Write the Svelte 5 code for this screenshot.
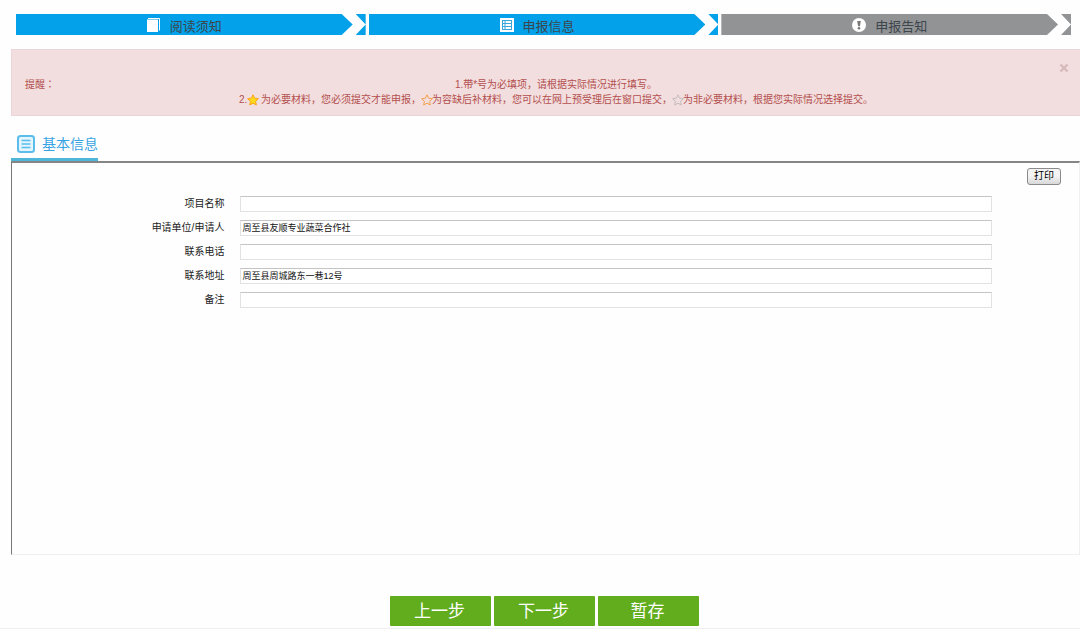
<script lang="ts">
  const steps = [
    { label: "阅读须知", icon: "book", active: true },
    { label: "申报信息", icon: "list", active: true },
    { label: "申报告知", icon: "notice", active: false },
  ];

  let fields = $state([
    { id: "project", label: "项目名称", value: "" },
    { id: "applicant", label: "申请单位/申请人", value: "周至县友顺专业蔬菜合作社" },
    { id: "phone", label: "联系电话", value: "" },
    { id: "address", label: "联系地址", value: "周至县周城路东一巷12号" },
    { id: "remark", label: "备注", value: "" },
  ]);

  let showAlert = $state(true);
</script>

{#snippet star(kind: string)}
  <svg class="star {kind}" viewBox="0 0 12 12" aria-hidden="true">
    <path d="M6 .8 7.6 4.2 11.4 4.7 8.6 7.3 9.3 11 6 9.2 2.7 11 3.4 7.3 .6 4.7 4.4 4.2Z" />
  </svg>
{/snippet}

<main>
  <ol class="steps">
    {#each steps as step}
      <li class:active={step.active}>
        <div class="bar">
          <svg class="step-icon" viewBox="0 0 14 14" aria-hidden="true">
            {#if step.icon === "book"}
              <path d="M0 1.5H11V14H0Z" fill="#fff" />
              <path d="M1 .5H12.5V12.5" fill="none" stroke="#fff" />
            {:else if step.icon === "list"}
              <path d="M0 0H14V14H0Z" fill="#fff" />
              <path
                d="M2 2.5H12M2 5.5H12M2 8.5H12M2 11.5H12M2.5 2V12M5 2V12M11.5 2V12"
                fill="none"
                stroke="#3aa6dc"
              />
            {:else}
              <circle cx="7" cy="7" r="7" fill="#fff" />
              <path d="M5.2 3H8.8L7.9 8.2H6.1Z" fill="#777" />
              <circle cx="7" cy="10.2" r="1.3" fill="#777" />
            {/if}
          </svg>
          <span>{step.label}</span>
        </div>
        <div class="tail"></div>
      </li>
    {/each}
  </ol>

  {#if showAlert}
    <div class="alert" role="alert">
      <strong>提醒：</strong>
      <p>
        1.带*号为必填项，请根据实际情况进行填写。<br />
        2.{@render star("full")} 为必要材料，您必须提交才能申报，{@render star("late")}为容缺后补材料，您可以在网上预受理后在窗口提交，{@render star("empty")}为非必要材料，根据您实际情况选择提交。
      </p>
      <button class="close" aria-label="关闭" onclick={() => (showAlert = false)}>
        <svg viewBox="0 0 10 10"><path d="M1.5 1.5 8.5 8.5M8.5 1.5 1.5 8.5" /></svg>
      </button>
    </div>
  {/if}

  <h2>
    <svg viewBox="0 0 18 18" aria-hidden="true">
      <rect x="1" y="1" width="16" height="16" rx="2.5" />
      <path d="M4.5 5.5H13.5M4.5 9H13.5M4.5 12.5H13.5" />
    </svg>
    基本信息
  </h2>

  <section class="panel">
    <button class="print">打印</button>
    <form>
      {#each fields as field}
        <div class="row">
          <label for={field.id}>{field.label}</label>
          <input id={field.id} type="text" bind:value={field.value} />
        </div>
      {/each}
    </form>
  </section>

  <footer>
    <button>上一步</button>
    <button>下一步</button>
    <button>暂存</button>
  </footer>
</main>

<style>
  :global(body) {
    background: #fefefe;
  }
  * {
    box-sizing: border-box;
    margin: 0;
    padding: 0;
    font-family: "Liberation Sans", "Noto Sans CJK SC", sans-serif;
  }
  main {
    display: flex;
    flex-direction: column;
    min-height: 100vh;
    padding-left: 11px;
    border-bottom: 1px solid #f0f0f0;
  }

  /* steps */
  .steps {
    display: flex;
    gap: 3px;
    list-style: none;
    padding: 14px 9px 14px 5px;
  }
  .steps li {
    flex: 1;
    display: flex;
    gap: 3px;
    height: 21px;
    color: #929395;
  }
  .steps li.active {
    color: #02a1e9;
  }
  .bar {
    flex: 1;
    display: flex;
    align-items: center;
    justify-content: center;
    gap: 9px;
    background: currentColor;
    clip-path: polygon(0 0, calc(100% - 11px) 0, 100% 50%, calc(100% - 11px) 100%, 0 100%);
  }
  .bar span {
    padding-top: 4px;
    font-size: 13px;
    line-height: 18px;
    color: #3c464c;
  }
  .step-icon {
    width: 14px;
    height: 14px;
  }
  .tail {
    width: 10px;
    background: currentColor;
    clip-path: polygon(0 0, 100% 0, 100% 100%, 0 100%, 100% 50%);
  }

  /* reminder */
  .alert {
    position: relative;
    display: flex;
    padding: 27px 23px 8px 13px;
    border: 1px solid #ecd5d8;
    border-right: 0;
    background: #f2dede;
    color: #b34f4e;
    font-size: 10px;
    line-height: 15px;
  }
  .alert strong {
    font-family: "Liberation Sans", "Noto Sans CJK TC", sans-serif;
    font-weight: normal;
  }
  .alert p {
    flex: 1;
    text-align: center;
  }
  .star {
    width: 12px;
    height: 12px;
    margin-right: -1px;
    vertical-align: -3px;
  }
  .star path {
    fill: none;
    stroke: #f5a04c;
  }
  .star.full path {
    fill: #ffd91c;
    stroke: #f9a51a;
  }
  .star.empty path {
    stroke: #c3bcbb;
  }
  .close {
    position: absolute;
    top: 13px;
    right: 11px;
    width: 10px;
    height: 10px;
    border: 0;
    background: none;
    cursor: pointer;
  }
  .close svg {
    display: block;
  }
  .close path {
    stroke: #d5b9bb;
    stroke-width: 2.4;
  }

  /* basic information */
  h2 {
    align-self: flex-start;
    display: flex;
    align-items: center;
    gap: 7px;
    margin-top: 16px;
    padding: 0 0 2px 6px;
    height: 29px;
    border-bottom: 3px solid #4eb6d8;
    color: #37a3e3;
    font-size: 14px;
    line-height: 20px;
    font-weight: normal;
  }
  h2 svg {
    width: 18px;
    height: 18px;
    fill: #e3f5fd;
    stroke: #5bbdec;
    stroke-width: 2;
  }
  h2 path {
    stroke-width: 1.6;
  }
  .panel {
    flex: 1;
    display: flex;
    flex-direction: column;
    padding: 5px 18px 0 0;
    border: 1px solid #f0f0f0;
    border-top: 2px solid #858585;
    border-left: 1px solid #777;
  }
  .print {
    align-self: flex-end;
    width: 34px;
    height: 17px;
    padding-bottom: 2px;
    border: 1px solid #8a8a8a;
    border-radius: 3px;
    background: linear-gradient(#f4f4f4 45%, #d8d8d8);
    color: #000;
    font-size: 10px;
    line-height: 12px;
  }
  form {
    display: flex;
    flex-direction: column;
    gap: 8px;
    padding: 11px 69px 20px 0;
  }
  .row {
    display: grid;
    grid-template-columns: 13fr 46fr;
    gap: 16px;
    align-items: center;
  }
  label {
    text-align: right;
    font-size: 10px;
    line-height: 16px;
    color: #222;
  }
  input {
    width: 100%;
    height: 16px;
    padding: 0 1px 2px;
    border: 1px solid #e2e2e2;
    border-top-color: #c4c4c4;
    background: #fff;
    color: #111;
    font-size: 9px;
    line-height: 12px;
  }

  footer {
    display: flex;
    justify-content: center;
    gap: 3px;
    padding: 41px 2px 2px 0;
  }
  footer button {
    width: 101px;
    height: 30px;
    padding: 2px 2px 0 0;
    border: 0;
    border-radius: 1px;
    background: #62ad1e;
    color: #fff;
    font-size: 17px;
    line-height: 28px;
  }
</style>
